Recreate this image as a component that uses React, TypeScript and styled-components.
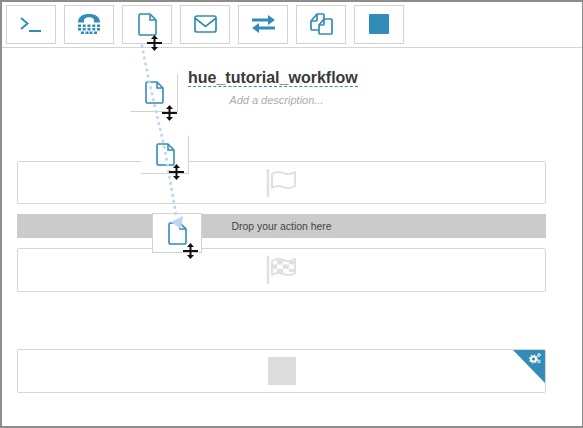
import React from 'react';
import styled, { createGlobalStyle } from 'styled-components';

const Global = createGlobalStyle`
  html, body { margin: 0; padding: 0; background: #fff; }
  body { font-family: "Liberation Sans", Arial, sans-serif; }
`;

const Frame = styled.div`
  position: relative;
  width: 583px;
  height: 428px;
  box-sizing: border-box;
  border: 2px solid #8c8c8c;
  border-right-width: 1px;
  background: #fff;
  overflow: hidden;
`;

const Toolbar = styled.div`
  display: flex;
  gap: 8px;
  height: 46px;
  box-sizing: border-box;
  padding: 3px 0 0 4px;
  border-bottom: 1px solid #d4d4d4;
`;

const ToolButton = styled.div`
  position: relative;
  width: 50px;
  height: 39px;
  box-sizing: border-box;
  padding-bottom: 1px;
  border: 1px solid #d2d2d2;
  display: flex;
  align-items: center;
  justify-content: center;
`;

const Canvas = styled.div`
  padding: 0 36px 0 15px;
`;

const TitleBlock = styled.div`
  width: fit-content;
  margin: 21px 0 0 171px;
  text-align: center;
`;

const Title = styled.div`
  font-size: 16px;
  font-weight: 700;
  line-height: 17px;
  color: #3a3a3a;
  border-bottom: 1px dashed #338bb8;
`;

const Description = styled.div`
  margin-top: 6px;
  padding-left: 7px;
  font-size: 11px;
  line-height: 15px;
  font-style: italic;
  color: #aaa;
`;

const Node = styled.div<{ $top: number; $height?: number }>`
  position: relative;
  height: ${p => p.$height ?? 44}px;
  box-sizing: border-box;
  margin-top: ${p => p.$top}px;
  border: 1px solid #d6d6d6;
  border-radius: 2px;
  display: flex;
  align-items: center;
  justify-content: center;
  overflow: hidden;
`;

const DropZone = styled.div`
  height: 24px;
  margin-top: 10px;
  background: #cbcbcb;
  color: #444;
  font-size: 10.4px;
  display: flex;
  align-items: center;
  justify-content: center;
`;

const KillSquare = styled.div`
  width: 28px;
  height: 28px;
  background: #dcdcdc;
`;

const Corner = styled.div`
  position: absolute;
  top: 0;
  right: 0;
  width: 0;
  height: 0;
  border-style: solid;
  border-width: 0 32px 33px 0;
  border-color: transparent #338bb8 transparent transparent;
`;

const CornerIcon = styled.div`
  position: absolute;
  top: 3px;
  right: 4px;
  line-height: 0;
`;

const Ghost = styled.div<{ $x: number; $y: number; $full?: boolean }>`
  position: absolute;
  left: ${p => p.$x}px;
  top: ${p => p.$y}px;
  width: ${p => (p.$full ? 50 : 48)}px;
  height: ${p => (p.$full ? 40 : 39)}px;
  box-sizing: border-box;
  background: #fff;
  border: 1px solid ${p => (p.$full ? '#d2d2d2' : 'transparent')};
  border-right-color: #d2d2d2;
  border-bottom-color: #d2d2d2;
  display: flex;
  align-items: center;
  justify-content: center;
`;

const Overlay = styled.svg`
  position: absolute;
  left: -2px;
  top: -2px;
  pointer-events: none;
`;

const CursorWrap = styled.div<{ $x: number; $y: number }>`
  position: absolute;
  left: ${p => p.$x}px;
  top: ${p => p.$y}px;
  line-height: 0;
  z-index: 2;
`;

const FileIcon = () => (
  <svg width="19" height="23" viewBox="0 0 19 23" fill="none" stroke="#338bb8" strokeWidth="1.6">
    <path d="M2.400 1H12l6 6v13.600a1.400 1.400 0 0 1-1.400 1.400H2.400A1.400 1.400 0 0 1 1 20.600V2.400A1.400 1.400 0 0 1 2.400 1Z" strokeLinejoin="round" />
    <path d="M12 1.500V7h5.500" />
  </svg>
);

const TerminalIcon = () => (
  <svg width="22" height="18" viewBox="0 0 22 18" fill="none" stroke="#338bb8" strokeWidth="2">
    <path d="M1 3l6.500 5.500L1 14" />
    <path d="M9 16h12" />
  </svg>
);

const PhoneIcon = () => (
  <svg width="22" height="20" viewBox="0 0 22 20" fill="#338bb8">
    <path d="M0 8.500C0 2.500 5 0 11 0s11 2.500 11 8.500H16V5.500C15 3.800 13 3.300 11 3.300S7 3.800 6 5.500v3Z" />
    <path d="M0 10.500h3V13H0zM4.700 10.500h3V13h-3zM9.500 10.500h3V13h-3zM14.300 10.500h3V13h-3zM19 10.500h3V13h-3z" />
    <path d="M0 14h3v2.500H0zM4.700 14h3v2.500h-3zM9.500 14h3v2.500h-3zM14.300 14h3v2.500h-3zM19 14h3v2.500h-3z" />
    <path d="M3 17.500h3V20H3zM7.500 17.500h3V20h-3zM11.500 17.500h3V20h-3zM16 17.500h3V20h-3z" />
  </svg>
);

const MailIcon = () => (
  <svg width="23" height="18" viewBox="0 0 23 18" fill="none" stroke="#338bb8" strokeWidth="1.700">
    <rect x="1" y="1" width="21" height="16" rx="2" />
    <path d="M1.500 3.500l10 8 10-8" />
  </svg>
);

const SwapIcon = () => (
  <svg width="23" height="18" viewBox="0 0 23 18" fill="#338bb8">
    <path d="M0 3.500h16V0l7 5-7 5V6.500H0Z" />
    <path d="M23 11.500H7V8l-7 5 7 5v-3.500h16Z" />
  </svg>
);

const CopyIcon = () => (
  <svg width="23" height="22" viewBox="0 0 23 22" fill="none" stroke="#338bb8" strokeWidth="1.700" strokeLinejoin="round">
    <path d="M8 17H2a1 1 0 0 1-1-1V8l6-7h6a1 1 0 0 1 1 1v4" />
    <path d="M7 1.500V7a1 1 0 0 1-1 1H1.500" />
    <path d="M14 6h7a1 1 0 0 1 1 1v13a1 1 0 0 1-1 1H10a1 1 0 0 1-1-1v-8Z" fill="#fff" />
    <path d="M14 6.500V11a1 1 0 0 1-1 1H9.500" />
  </svg>
);

const StopIcon = () => (
  <svg width="20" height="20" viewBox="0 0 20 20">
    <rect width="20" height="20" rx="1" fill="#338bb8" />
  </svg>
);

const StartFlag = () => (
  <svg width="31" height="28" viewBox="0 0 31 28" fill="none" stroke="#e0e0e0">
    <path d="M2 1v26" strokeWidth="2.600" strokeLinecap="round" />
    <path d="M6 5c4-2.500 7-2.500 11-1s8 1.500 12-1v14c-4 2.500-8 2.500-12 1s-7-1.500-11 1Z" strokeWidth="2" strokeLinejoin="round" />
  </svg>
);

const EndFlag = () => (
  <svg width="31" height="28" viewBox="0 0 31 28" fill="none" stroke="#e0e0e0">
    <path d="M2 1v26" strokeWidth="2.600" strokeLinecap="round" />
    <path d="M6 5c4-2.500 7-2.500 11-1s8 1.500 12-1v14c-4 2.500-8 2.500-12 1s-7-1.500-11 1Z" strokeWidth="2" strokeLinejoin="round" />
    <path d="M11 3.500h6v5h-6zM23 4.500h6v4h-6zM6 8.500h5v4.500H6zM17 8.500h6v4.500h-6zM11 13h6v4h-6zM23 13h6v3h-6z" fill="#e0e0e0" stroke="none" />
  </svg>
);

const GearsIcon = () => (
  <svg width="12" height="11" viewBox="0 0 12 11" fill="none" stroke="#fff">
    <circle cx="4.500" cy="6" r="2.600" strokeWidth="2" />
    <circle cx="4.500" cy="6" r="4" strokeWidth="1.200" strokeDasharray="1.500 1.600" />
    <circle cx="10" cy="2" r="1.300" strokeWidth="1" />
    <circle cx="10" cy="8.500" r="1.300" strokeWidth="1" />
  </svg>
);

const MoveCursor = () => (
  <svg width="15" height="16" viewBox="0 0 15 16">
    <path d="M7.500 0L11 4H8.500v3H15v2H8.500v3H11l-3.500 4L4 12h2.500V9H0V7h6.500V4H4Z" fill="#111" />
  </svg>
);

export default function App() {
  return (
    <Frame>
      <Global />
      <Toolbar>
        <ToolButton><TerminalIcon /></ToolButton>
        <ToolButton><PhoneIcon /></ToolButton>
        <ToolButton>
          <FileIcon />
          <CursorWrap $x={24} $y={29}><MoveCursor /></CursorWrap>
        </ToolButton>
        <ToolButton><MailIcon /></ToolButton>
        <ToolButton><SwapIcon /></ToolButton>
        <ToolButton><CopyIcon /></ToolButton>
        <ToolButton><StopIcon /></ToolButton>
      </Toolbar>
      <Canvas>
        <TitleBlock>
          <Title>hue_tutorial_workflow</Title>
          <Description>Add a description...</Description>
        </TitleBlock>
        <Node $top={53} $height={43}>
          <StartFlag />
        </Node>
        <DropZone>Drop your action here</DropZone>
        <Node $top={10}>
          <EndFlag />
        </Node>
        <Node $top={57}>
          <KillSquare />
          <Corner />
          <CornerIcon>
            <GearsIcon />
          </CornerIcon>
        </Node>
      </Canvas>

      <Ghost $x={128} $y={71}>
        <FileIcon />
        <CursorWrap $x={31} $y={31}><MoveCursor /></CursorWrap>
      </Ghost>
      <Ghost $x={139} $y={133}>
        <FileIcon />
        <CursorWrap $x={27} $y={28}><MoveCursor /></CursorWrap>
      </Ghost>
      <Ghost $x={150} $y={211} $full>
        <FileIcon />
        <CursorWrap $x={30} $y={29}><MoveCursor /></CursorWrap>
      </Ghost>

      <Overlay width="583" height="428" viewBox="0 0 583 428">
        <path
          d="M142 46 L150 85 L165 150 L176 215"
          fill="none"
          stroke="#bcd3f6"
          strokeWidth="3"
          strokeLinecap="round"
          strokeDasharray="0.1 6"
        />
        <path d="M171 222 L183 216 L181 229 Z" fill="#bcd3f6" />
      </Overlay>
    </Frame>
  );
}
